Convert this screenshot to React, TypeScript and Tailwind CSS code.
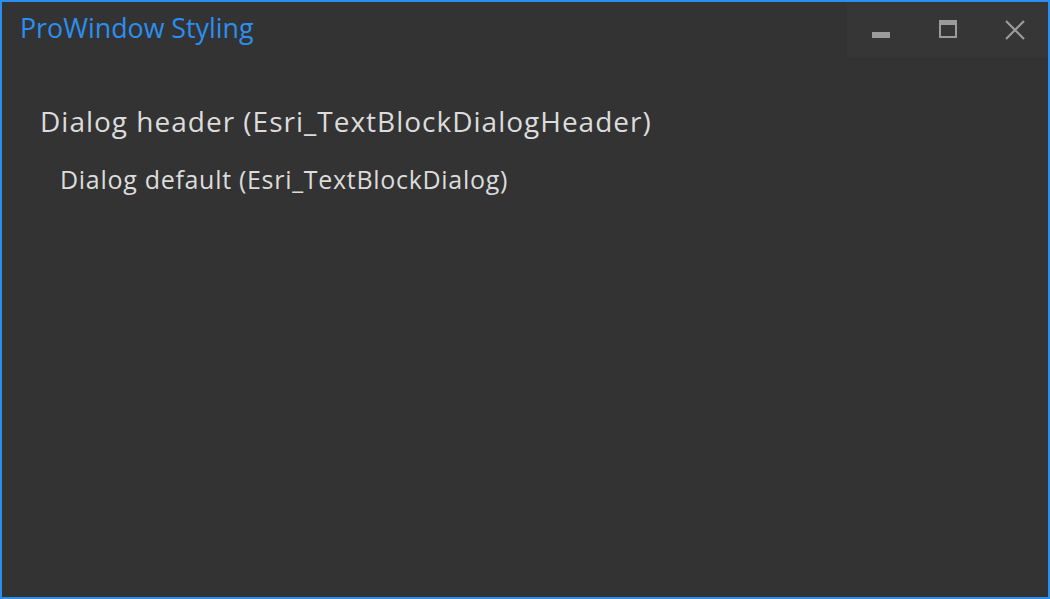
export default function App() {
  return (
    <div
      className="h-[599px] w-[1050px] flex flex-col border-2 border-[#2b8ff0] bg-[#333333]"
      style={{ fontFamily: '"Open Sans", "Noto Sans", sans-serif' }}
    >
      {/* title bar */}
      <div className="flex h-[55px] items-start">
        <div className="flex-1 pl-[18px] pt-[8px] text-[26.8px] leading-[36px] text-[#2b8ff0]">
          ProWindow Styling
        </div>
        <div className="flex h-[55px] w-[201px] bg-[#363636]">
          <button className="flex w-[67px] items-start justify-center pt-[30px]">
            <span className="block h-[6px] w-[18px] bg-[#9b9b9b]" />
          </button>
          <button className="flex w-[67px] items-start justify-center pt-[18px]">
            <span className="block h-[18px] w-[18px] border-2 border-t-[5px] border-[#9b9b9b]" />
          </button>
          <button className="flex w-[67px] items-start justify-center pt-[18px]">
            <svg width="20" height="20" viewBox="0 0 20 20">
              <path d="M1 1 L19 19 M19 1 L1 19" stroke="#9b9b9b" strokeWidth="2.2" />
            </svg>
          </button>
        </div>
      </div>

      {/* content */}
      <div className="flex flex-col pl-[38px] pt-[45px]">
        <div className="text-[28px] leading-[38px] tracking-[1px] text-[#dcdcdc]">
          Dialog header (Esri_TextBlockDialogHeader)
        </div>
        <div className="mt-[22px] pl-[20px] text-[25px] leading-[34px] tracking-[0.7px] text-[#dcdcdc]">
          Dialog default (Esri_TextBlockDialog)
        </div>
      </div>
    </div>
  );
}
